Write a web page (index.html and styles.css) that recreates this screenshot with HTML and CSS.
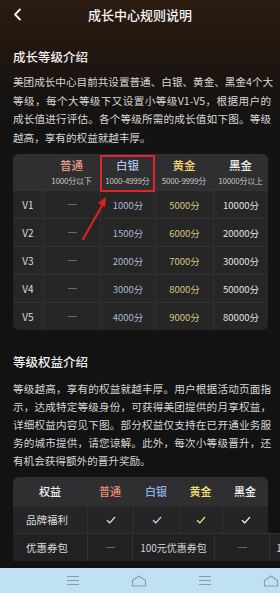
FILE: index.html
```html
<!DOCTYPE html>
<html lang="zh-CN">
<head>
<meta charset="utf-8">
<link rel="stylesheet" href="styles.css">
</head>
<body>
<div class="screen">
  <main class="page">
    <header class="topbar">
      <svg class="back" width="9" height="13" viewBox="0 0 9 13"><polyline points="7,1.5 2,6.5 7,11.5" fill="none" stroke="#f2f2f2" stroke-width="1.8" stroke-linecap="round" stroke-linejoin="round"/></svg>
      <h1 class="title">成长中心规则说明</h1>
    </header>

    <h2 class="sec-title first">成长等级介绍</h2>
    <p class="para p1"><span class="ln">美团成长中心目前共设置普通、白银、黄金、黑金4个大</span><span class="ln">等级，每个大等级下又设置小等级V1-V5，根据用户的</span><span class="ln">成长值进行评估。各个等级所需的成长值如下图。等级</span><span class="ln end">越高，享有的权益就越丰厚。</span></p>

    <div class="level-wrap">
      <div class="level-table">
        <div class="lt-head">
          <div class="lh"></div>
          <div class="lh"><span class="lh-name c-pt">普通</span><span class="lh-sub">1000分以下</span></div>
          <div class="lh"><span class="lh-name c-by">白银</span><span class="lh-sub">1000-4999分</span></div>
          <div class="lh"><span class="lh-name c-hj">黄金</span><span class="lh-sub">5000-9999分</span></div>
          <div class="lh"><span class="lh-name c-hk">黑金</span><span class="lh-sub">10000分以上</span></div>
        </div>
        <div class="lt-row"><div class="lv">V1</div><div class="lc"><i class="dash"></i></div><div class="lc v-by">1000分</div><div class="lc v-hj">5000分</div><div class="lc v-hk">10000分</div></div>
        <div class="lt-row"><div class="lv">V2</div><div class="lc"><i class="dash"></i></div><div class="lc v-by">1500分</div><div class="lc v-hj">6000分</div><div class="lc v-hk">20000分</div></div>
        <div class="lt-row"><div class="lv">V3</div><div class="lc"><i class="dash"></i></div><div class="lc v-by">2000分</div><div class="lc v-hj">7000分</div><div class="lc v-hk">30000分</div></div>
        <div class="lt-row"><div class="lv">V4</div><div class="lc"><i class="dash"></i></div><div class="lc v-by">3000分</div><div class="lc v-hj">8000分</div><div class="lc v-hk">50000分</div></div>
        <div class="lt-row"><div class="lv">V5</div><div class="lc"><i class="dash"></i></div><div class="lc v-by">4000分</div><div class="lc v-hj">9000分</div><div class="lc v-hk">80000分</div></div>
      </div>
      <div class="mark-box"></div>
      <svg class="mark-arrow" width="40" height="50" viewBox="0 0 40 50">
        <line x1="9" y1="47" x2="29" y2="12" stroke="#e3221c" stroke-width="2" stroke-linecap="round"/>
        <polygon points="32,5 24,11 31,15" fill="#e3221c"/>
      </svg>
    </div>

    <h2 class="sec-title second">等级权益介绍</h2>
    <p class="para p2"><span class="ln">等级越高，享有的权益就越丰厚。用户根据活动页面指</span><span class="ln">示，达成特定等级身份，可获得美团提供的月享权益，</span><span class="ln">详细权益内容见下图。部分权益仅支持在已开通业务服</span><span class="ln">务的城市提供，请您谅解。此外，每次小等级晋升，还</span><span class="ln end">有机会获得额外的晋升奖励。</span></p>

    <div class="right-table">
      <div class="rt-head">
        <div class="rh c-white">权益</div>
        <div class="rh c-pt2">普通</div>
        <div class="rh c-by2">白银</div>
        <div class="rh c-hj2">黄金</div>
        <div class="rh c-white">黑金</div>
      </div>
      <div class="rt-row">
        <div class="rc name">品牌福利</div>
        <div class="rc"><svg width="10" height="8" viewBox="0 0 10 8"><polyline points="1,4.2 3.8,6.8 9,1" fill="none" stroke="#f3dccd" stroke-width="1.2"/></svg></div>
        <div class="rc"><svg width="10" height="8" viewBox="0 0 10 8"><polyline points="1,4.2 3.8,6.8 9,1" fill="none" stroke="#c3daf2" stroke-width="1.2"/></svg></div>
        <div class="rc"><svg width="10" height="8" viewBox="0 0 10 8"><polyline points="1,4.2 3.8,6.8 9,1" fill="none" stroke="#f2e48c" stroke-width="1.2"/></svg></div>
        <div class="rc"><svg width="10" height="8" viewBox="0 0 10 8"><polyline points="1,4.2 3.8,6.8 9,1" fill="none" stroke="#f4f4f4" stroke-width="1.2"/></svg></div>
      </div>
      <div class="rt-row wide">
        <div class="rc name">优惠券包</div>
        <div class="rc"><i class="dash"></i></div>
        <div class="rc">100元优惠券包</div>
        <div class="rc"><i class="dash"></i></div>
        <div class="rc">100元优惠券包</div>
      </div>
    </div>
  </main>

  <nav class="navbar">
    <div class="nav-item"><svg width="14" height="11" viewBox="0 0 14 11"><path d="M1 1.5H13M1 5.5H13M1 9.5H13" stroke="#8b9ba6" stroke-width="1.2"/></svg></div>
    <div class="nav-item"><svg width="16" height="12" viewBox="0 0 16 12"><path d="M1.5 5.5L8 1L14.5 5.5V11H1.5Z" fill="none" stroke="#8b9ba6" stroke-width="1.1" stroke-linejoin="round"/></svg></div>
    <div class="nav-item"><svg width="14" height="11" viewBox="0 0 14 11"><path d="M1 1.5H13M1 5.5H13M1 9.5H13" stroke="#8b9ba6" stroke-width="1.2"/></svg></div>
    <div class="nav-item"><svg width="16" height="12" viewBox="0 0 16 12"><path d="M1.5 5.5L8 1L14.5 5.5V11H1.5Z" fill="none" stroke="#8b9ba6" stroke-width="1.1" stroke-linejoin="round"/></svg></div>
  </nav>
</div>
</body>
</html>
```

FILE: styles.css
```css
* { box-sizing: border-box; margin: 0; padding: 0; }
html, body { width: 280px; height: 593px; overflow: hidden; background: #121212; }
body { font-family: "Noto Sans CJK SC", "Noto Sans", sans-serif; color: #e6e6e6; }

.screen { width: 280px; height: 593px; display: flex; flex-direction: column; }

.page {
  height: 568px;
  overflow: hidden;
  padding: 0 0 0 13px;
  background: linear-gradient(180deg, #2b1c12 0px, #22170f 45px, #171310 95px, #131313 140px, #121212 100%);
}

.topbar { height: 30px; display: flex; align-items: center; position: relative; }
.back { position: absolute; left: 0; top: 8px; }
.title { width: 254px; text-align: center; font-size: 13px; font-weight: 500; color: #f4f4f4; line-height: 28px; }

.sec-title { font-size: 12.5px; font-weight: 500; color: #f0f0f0; line-height: 20px; }
.sec-title.first { margin-top: 17px; }
.sec-title.second { margin-top: 22px; }

.para { width: 258px; font-size: 10.6px; color: #d6d6d6; text-autospace: no-autospace; }
.ln { display: block; white-space: nowrap; text-align: justify; text-align-last: justify; }
.ln.end { text-align-last: left; }
.p1 { line-height: 18.6px; margin-top: 6px; }
.p2 { line-height: 17.8px; margin-top: 8px; }

.level-wrap { position: relative; width: 255px; margin-top: 7px; }
.level-table { width: 255px; background: #262627; border-radius: 6px; overflow: hidden; }
.lt-head, .lt-row { display: grid; grid-template-columns: 30px 57px 55px 58px 55px; }
.lt-head { height: 36px; background: #2f2f31; }
.lh { display: flex; flex-direction: column; align-items: center; justify-content: center; }
.lh-name { font-size: 11.5px; line-height: 14px; font-weight: 500; }
.lh-sub { font-size: 8px; line-height: 11px; color: #c4c4c4; margin-top: 3px; letter-spacing: -0.2px; }
.c-pt { color: #e99b85; }
.c-by { color: #a9c1e8; }
.c-hj { color: #f2d56c; }
.c-hk { color: #ececec; }

.lt-row { height: 28px; border-top: 1px solid #323234; }
.lt-row > div { display: flex; align-items: center; justify-content: center; font-size: 9.5px; border-left: 1px solid #303032; }
.lt-row > div:first-child { border-left: none; }
.lv { color: #dcdcdc; font-size: 10px !important; }
.v-by { color: #a8b8d6; }
.v-hj { color: #d9c37e; }
.v-hk { color: #e2e2e2; }
.dash { display: block; width: 9px; height: 1px; background: #6a6a6a; }

.mark-box { position: absolute; left: 87px; top: 1px; width: 55px; height: 37px; border: 2px solid #e0262a; }
.mark-arrow { position: absolute; left: 61px; top: 38px; }

.right-table { width: 267px; margin-top: 8px; }
.rt-head, .rt-row { display: grid; grid-template-columns: 74px 46px 46px 43px 46px; width: 255px; }
.rt-head { height: 28px; background: #2f2f31; border-radius: 6px 6px 0 0; }
.rh { display: flex; align-items: center; justify-content: center; font-size: 11px; font-weight: 500; }
.c-white { color: #f0f0f0; }
.c-pt2 { color: #ec8c78; }
.c-by2 { color: #8fb1ea; }
.c-hj2 { color: #f2e070; }

.rt-row { height: 28px; background: #252527; border-top: 1px solid #323234; }
.rc { display: flex; align-items: center; justify-content: center; font-size: 10px; color: #d4d4d4; border-left: 1px solid #303032; white-space: nowrap; }
.rc:first-child { border-left: none; }
.rc.name { font-size: 10.5px; color: #dcdcdc; padding-right: 6px; }
.rt-row.wide { grid-template-columns: 74px 45px 82px 55px 80px; width: 336px; background: #212123; }

.navbar {
  height: 25px;
  background: #bfe1f3;
  display: grid;
  grid-template-columns: repeat(4, 66px);
  padding-left: 40px;
  align-items: center;
}
.nav-item { display: flex; justify-content: center; align-items: center; }
```
